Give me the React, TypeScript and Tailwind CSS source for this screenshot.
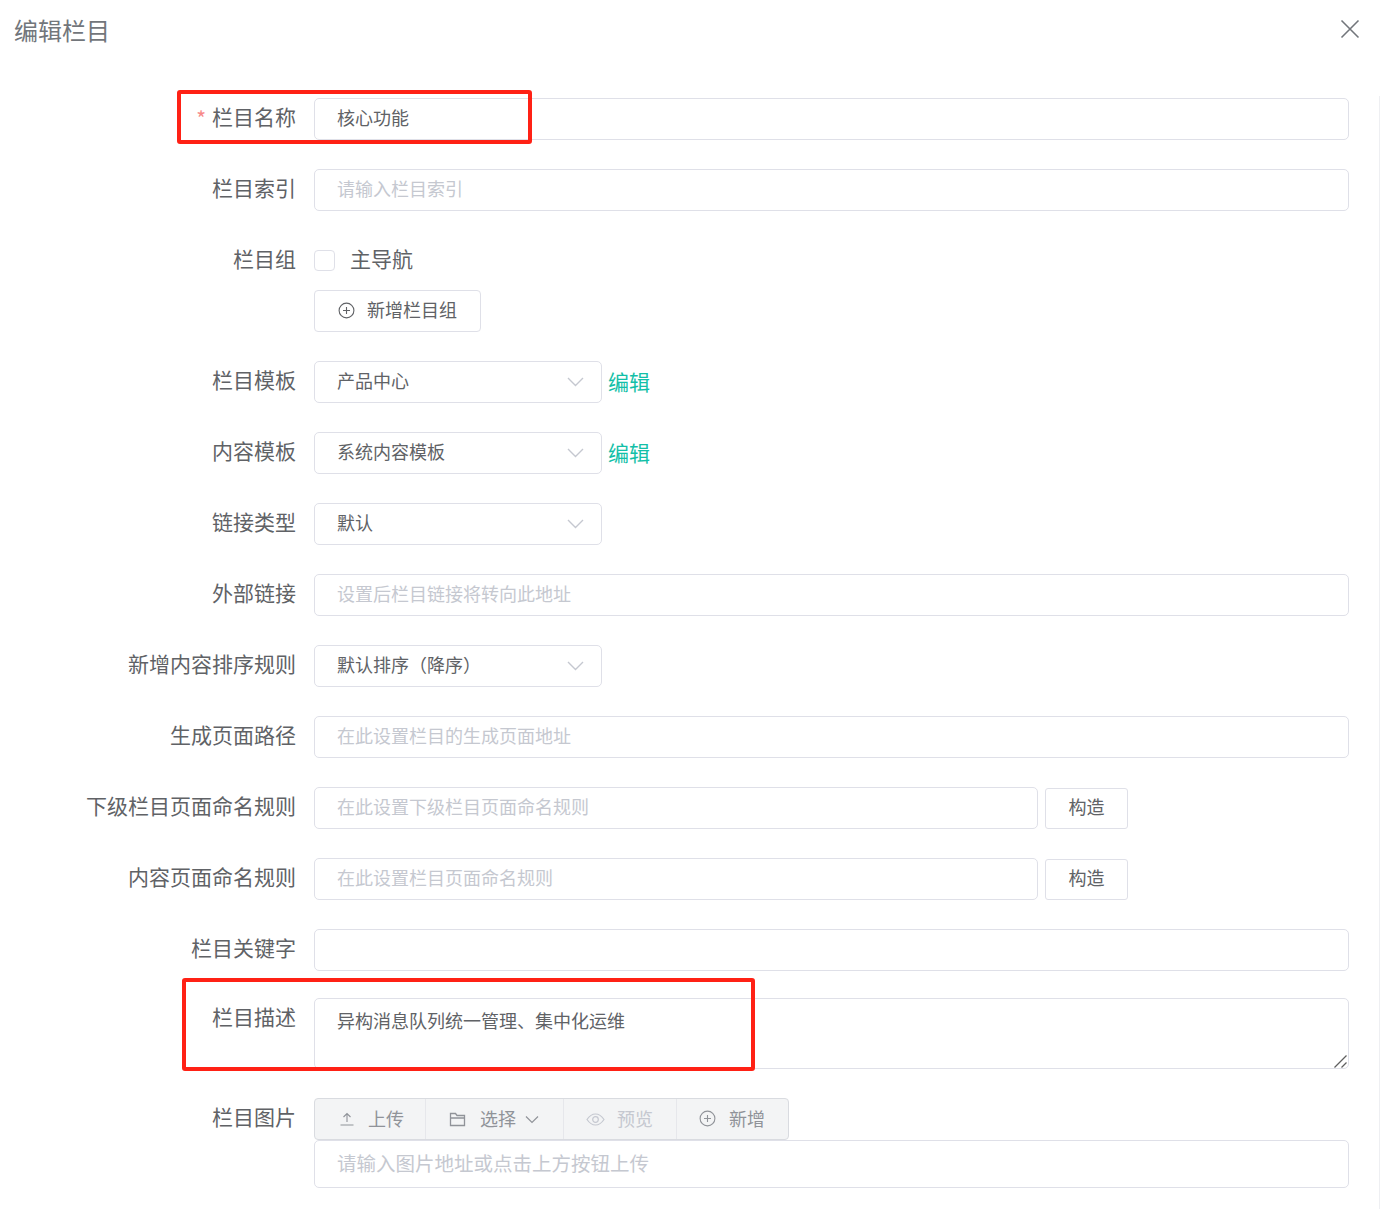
import { ReactNode } from 'react';

const inputClass =
  'h-[42px] w-full rounded-[5px] border border-[#dfe0e8] bg-white px-[22px] pb-[4px] text-[18px] text-[#606266] outline-none placeholder:text-[#c5c8d0]';

const Field = ({ label, required, children, className = 'mb-[29px]' }: { label: string; required?: boolean; children: ReactNode; className?: string }) => (
  <div className={`flex items-start ${className}`}>
    <label className="w-[296px] shrink-0 text-right text-[21px] leading-[37px] text-[#606266]">
      {required && <span className="relative top-[2px] mr-[6px] text-[21px] text-[#f78989]">*</span>}
      {label}
    </label>
    <div className="ml-[18px] w-[1035px] shrink-0">{children}</div>
  </div>
);

const Select = ({ value }: { value: string }) => (
  <div className="flex h-[42px] w-[288px] shrink-0 items-center justify-between rounded-[5px] border border-[#dfe0e8] bg-white pl-[22px] pr-[17px] text-[18px] text-[#606266]">
    <span className="pb-[4px]">{value}</span>
    <svg width="17" height="10" viewBox="0 0 17 10" fill="none" stroke="#c5c8d0" strokeWidth="1.4">
      <path d="M1 1l7.5 7.5L16 1" />
    </svg>
  </div>
);

const EditLink = () => <a className="ml-[6px] pb-[1px] text-[21px] text-[#13bfa8]">编辑</a>;

const BuildButton = () => (
  <button className="ml-[7px] mt-[1px] h-[41px] w-[83px] shrink-0 rounded-[3px] border border-[#dfe0e8] bg-white pb-[4px] text-[18px] text-[#606266]">
    构造
  </button>
);

const PlusCircle = ({ color = '#606266' }: { color?: string }) => (
  <svg className="mb-[1px]" width="17" height="17" viewBox="0 0 17 17" fill="none" stroke={color} strokeWidth="1.1">
    <circle cx="8.5" cy="8.5" r="7.4" />
    <path d="M8.5 5v7M5 8.5h7" />
  </svg>
);

const App = () => {
  return (
    <div className="relative h-[1209px] w-[1380px] overflow-hidden bg-white font-['Noto_Sans_CJK_SC','Noto_Sans',sans-serif]">
      {/* Header */}
      <div className="flex h-[96px] items-start justify-between pl-[14px] pr-[20px] pt-[12px]">
        <h2 className="text-[24px] leading-[36px] text-[#72767b]">编辑栏目</h2>
        <svg className="mt-[7px]" width="20" height="20" viewBox="0 0 20 20" fill="none" stroke="#72767b" strokeWidth="1.6">
          <path d="M1.5 1.5l17 17M18.5 1.5l-17 17" />
        </svg>
      </div>

      {/* Form */}
      <div className="h-[1113px] border-r border-[#eeeff2] pt-[2px]">
        <Field label="栏目名称" required>
          <input className={inputClass} defaultValue="核心功能" />
        </Field>
        <Field label="栏目索引">
          <input className={inputClass} placeholder="请输入栏目索引" />
        </Field>
        <Field label="栏目组">
          <div className="flex h-[42px] items-center pb-[2px]">
            <span className="h-[21px] w-[21px] rounded-[4px] border border-[#dfe0e8] bg-white" />
            <span className="ml-[15px] pb-[2px] text-[21px] text-[#606266]">主导航</span>
          </div>
          <button className="mt-[8px] flex h-[42px] w-[167px] items-center rounded-[4px] border border-[#dfe0e8] bg-white pl-[23px] text-[18px] text-[#606266]">
            <PlusCircle />
            <span className="ml-[12px] pb-[3px]">新增栏目组</span>
          </button>
        </Field>
        <Field label="栏目模板">
          <div className="flex items-center">
            <Select value="产品中心" />
            <EditLink />
          </div>
        </Field>
        <Field label="内容模板">
          <div className="flex items-center">
            <Select value="系统内容模板" />
            <EditLink />
          </div>
        </Field>
        <Field label="链接类型">
          <Select value="默认" />
        </Field>
        <Field label="外部链接">
          <input className={inputClass} placeholder="设置后栏目链接将转向此地址" />
        </Field>
        <Field label="新增内容排序规则">
          <Select value="默认排序（降序）" />
        </Field>
        <Field label="生成页面路径">
          <input className={inputClass} placeholder="在此设置栏目的生成页面地址" />
        </Field>
        <Field label="下级栏目页面命名规则">
          <div className="flex items-start">
            <input className={`${inputClass} !w-[724px] shrink-0`} placeholder="在此设置下级栏目页面命名规则" />
            <BuildButton />
          </div>
        </Field>
        <Field label="内容页面命名规则">
          <div className="flex items-start">
            <input className={`${inputClass} !w-[724px] shrink-0`} placeholder="在此设置栏目页面命名规则" />
            <BuildButton />
          </div>
        </Field>
        <Field label="栏目关键字" className="mb-[27px]">
          <input className={inputClass} />
        </Field>
        <Field label="栏目描述">
          <div className="relative h-[71px]">
            <textarea
              className="block h-[71px] w-full resize-none rounded-[5px] border border-[#dfe0e8] bg-white px-[22px] py-[6px] text-[18px] leading-[30px] text-[#606266] outline-none"
              defaultValue="异构消息队列统一管理、集中化运维"
            />
            <svg className="absolute bottom-[1px] right-[2px]" width="13" height="13" viewBox="0 0 13 13" fill="none" stroke="#5f5f5f" strokeWidth="1.3">
              <path d="M0.5 12.500L12.500 0.500M7.500 12.500L12.500 7.500" />
            </svg>
          </div>
        </Field>
        <Field label="栏目图片" className="mb-0">
          <div className="flex h-[42px] w-[475px] rounded-[4px] border border-[#d9dbe0] bg-[#f3f4f5] text-[18px] text-[#909399]">
            <div className="flex w-[111px] items-center border-r border-[#e6e7eb] pl-[24px]">
              <svg width="16" height="16" viewBox="0 0 16 16" fill="none" stroke="#909399" strokeWidth="1.1">
                <path d="M8 11V2.5M4.5 6L8 2.5 11.5 6M1.5 14h13" />
              </svg>
              <span className="ml-[13px] pb-[1px]">上传</span>
            </div>
            <div className="flex w-[138px] items-center border-r border-[#e6e7eb] pl-[23px]">
              <svg width="17" height="15" viewBox="0 0 17 15" fill="none" stroke="#909399" strokeWidth="1.3">
                <path d="M1.5 13.5v-12h5l1.5 2h7.500v10zM1.500 6h14" />
              </svg>
              <span className="ml-[14px] pb-[1px]">选择</span>
              <svg className="ml-[9px]" width="14" height="9" viewBox="0 0 14 9" fill="none" stroke="#909399" strokeWidth="1.2">
                <path d="M1 1.500l6 6 6-6" />
              </svg>
            </div>
            <div className="flex w-[113px] items-center border-r border-[#e6e7eb] pl-[22px] text-[#c5c8d0]">
              <svg width="19" height="13" viewBox="0 0 19 13" fill="none" stroke="#c5c8d0" strokeWidth="1.200">
                <path d="M1 6.500C3.500 2.800 6 1 9.500 1S15.500 2.800 18 6.500C15.500 10.200 13 12 9.500 12S3.500 10.200 1 6.500z" />
                <circle cx="9.500" cy="6.500" r="2.800" />
              </svg>
              <span className="ml-[12px] pb-[1px]">预览</span>
            </div>
            <div className="flex flex-1 items-center pl-[22px]">
              <PlusCircle color="#909399" />
              <span className="ml-[13px] pb-[1px]">新增</span>
            </div>
          </div>
          <input
            className="h-[48px] w-full rounded-[5px] border border-[#dfe0e8] bg-white px-[22px] pb-[4px] text-[19.5px] text-[#606266] outline-none placeholder:text-[#c5c8d0]"
            placeholder="请输入图片地址或点击上方按钮上传"
          />
        </Field>
      </div>

      {/* Red annotation boxes */}
      <div className="absolute left-[177px] top-[90px] h-[54px] w-[355px] rounded-[3px] border-[4px] border-[#ff2115]" />
      <div className="absolute left-[182px] top-[978px] h-[93px] w-[573px] rounded-[3px] border-[4px] border-[#ff2115]" />
    </div>
  );
};

export default App;
